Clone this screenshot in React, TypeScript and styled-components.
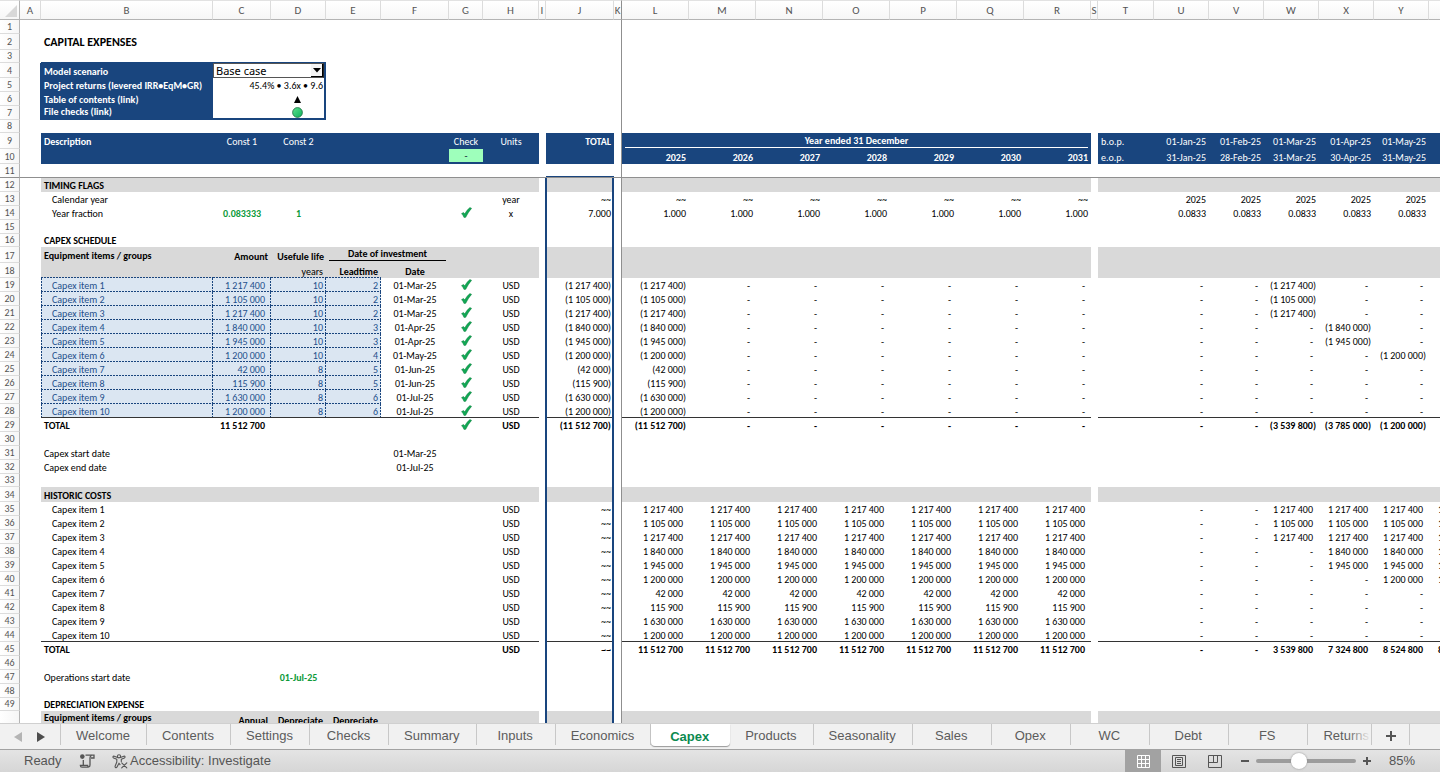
import React from "react";
import styled, { createGlobalStyle, css } from "styled-components";

const NAVY = "#19457e";
const GREY = "#d9d9d9";
const INPUT = "#dbe6f2";
const SHEET_FONT = `Calibri, Carlito, Lato, sans-serif`;
const UI_FONT = `"Liberation Sans", Arial, sans-serif`;

const GlobalStyle = createGlobalStyle`
  * { box-sizing: border-box; }
  body { margin: 0; background: #fff; }
`;

const Page = styled.div`
  display: flex;
  flex-direction: column;
  height: 100vh;
  overflow: hidden;
  font-family: ${UI_FONT};
`;

const Sheet = styled.main`
  flex: 1;
  min-height: 0;
  overflow: hidden;
  background: #fff;
`;

const Grid = styled.table`
  table-layout: fixed;
  width: 0;
  border-collapse: separate;
  border-spacing: 0;
  font: 10px/13px ${SHEET_FONT};
  color: #000;
`;

const Col = styled.col<{ $w: number }>`
  width: ${(p) => p.$w}px;
`;

const ColHead = styled.th<{ $freeze?: boolean }>`
  height: 20px;
  padding: 0;
  overflow: hidden;
  font-weight: 400;
  font-size: 11px;
  color: #555;
  text-align: center;
  background: linear-gradient(#fff, #f6f6f6);
  border-top: 1px solid #e2e2e2;
  border-bottom: 1px solid #b4b4b4;
  border-right: 1px solid ${(p) => (p.$freeze ? "#8f8f8f" : "#dcdcdc")};
`;

const Corner = styled(ColHead)`
  border-right-color: #b4b4b4;
  svg { display: block; margin: 1px 0 0 5px; }
`;

const RowHead = styled.th<{ $freeze?: boolean; $valign?: string }>`
  padding: 0;
  font-weight: 400;
  font-size: 10px;
  line-height: 12px;
  color: #555;
  text-align: center;
  vertical-align: ${(p) => p.$valign ?? "bottom"};
  background: linear-gradient(90deg, #fff, #f6f6f6);
  border-right: 1px solid #b4b4b4;
  border-bottom: 1px solid ${(p) => (p.$freeze ? "#8f8f8f" : "#dcdcdc")};
`;

type Edge = "none" | "freeze" | "total" | "outline" | "boxTop";
type VAlign = "top" | "middle" | "bottom";
interface CellStyle {
  $align?: "left" | "center" | "right";
  $valign?: VAlign;
  $pad?: number;
  $bg?: string;
  $color?: string;
  $bold?: boolean;
  $size?: number;
  $input?: boolean;
  $inputTop?: boolean;
  $bottom?: Edge;
  $col: string;
  $boxed?: boolean;
  $inBox?: boolean;
}

const dashH = `repeating-linear-gradient(90deg, ${NAVY} 0 2px, transparent 2px 3px)`;
const dashV = `repeating-linear-gradient(180deg, ${NAVY} 0 2px, transparent 2px 3px)`;

const Cell = styled.td<CellStyle>`
  padding: 0 ${(p) => p.$pad ?? 3}px;
  text-align: ${(p) => p.$align ?? "right"};
  vertical-align: ${(p) => p.$valign ?? "bottom"};
  white-space: nowrap;
  font-weight: ${(p) => (p.$bold ? 700 : 400)};
  font-size: ${(p) => p.$size ?? 10}px;
  color: ${(p) => p.$color ?? "#000"};
  background-color: ${(p) => p.$bg ?? "transparent"};
  ${(p) => p.$bottom === "freeze" && css`border-bottom: 1px solid #8f8f8f;`}
  ${(p) => p.$bottom === "total" && css`box-shadow: inset 0 -1px #333;`}
  ${(p) => p.$bottom === "boxTop" && css`box-shadow: inset 0 -1px ${NAVY};`}
  ${(p) =>
    p.$bottom === "outline" &&
    css`
      line-height: 12px;
      border-bottom: 2px solid ${NAVY};
    `}
  ${(p) => p.$col === "K" && css`border-right: 1px solid #8f8f8f;`}
  ${(p) => p.$col === "I" && p.$boxed && css`border-right: 1px solid ${NAVY};`}
  ${(p) =>
    p.$col === "J" &&
    p.$boxed &&
    css`
      padding-right: 1px;
      border-left: 1px solid ${NAVY};
      border-right: 2px solid ${NAVY};
    `}
  ${(p) => p.$col === "J" && p.$bottom === "freeze" && css`box-shadow: inset 0 -1px ${NAVY};`}
  ${(p) => p.$col === "A" && p.$inBox && css`border-right: 1px solid ${NAVY};`}
  ${(p) => p.$col === "C" && p.$inBox && css`border-right: 2px solid ${NAVY};`}
  ${(p) =>
    p.$input &&
    css`
      background-color: ${INPUT};
      background-image: ${dashH}, ${dashV};
      background-size: 100% 1px, 1px 100%;
      background-position: 0 100%, 100% 0;
      background-repeat: no-repeat;
    `}
  ${(p) =>
    p.$input &&
    p.$col === "B" &&
    css`
      background-image: ${dashH}, ${dashV}, ${dashV};
      background-size: 100% 1px, 1px 100%, 1px 100%;
      background-position: 0 100%, 100% 0, 0 0;
    `}
  ${(p) =>
    p.$inputTop &&
    css`
      background-image: ${dashH};
      background-size: 100% 1px;
      background-position: 0 100%;
      background-repeat: no-repeat;
    `}
`;

const Row = styled.tr<{ $h: number }>`
  height: ${(p) => p.$h}px;
`;

const RuledLabel = styled.span<{ $line: string }>`
  display: block;
  text-align: center;
  border-bottom: 1px solid ${(p) => p.$line};
`;

const LowLabel = styled.span`
  display: block;
  padding-top: 3px;
`;

const CheckTotal = styled.span`
  display: block;
  margin-bottom: 2px;
  color: #123;
  background: #9effbb;
`;

const ScenarioBox = styled.span`
  display: flex;
  position: relative;
  height: 15px;
  background: #fff;
  border: 1px solid #555;
  border-right-color: #222;
`;

const ScenarioSelect = styled.select`
  flex: 1;
  min-width: 0;
  appearance: none;
  border: 0;
  padding: 0 2px;
  background: transparent;
  color: #000;
  font: 11px/13px "Noto Sans", sans-serif;
`;

const ScenarioArrow = styled.span`
  position: absolute;
  right: 0;
  top: 0;
  display: grid;
  place-items: center;
  width: 12px;
  height: 13px;
  background: #f4f4f4;
  border-right: 1px solid #000;
  border-bottom: 1px solid #000;
  pointer-events: none;
`;

const BoxLink = styled.a`
  display: block;
  padding-left: 58px;
  color: #000;
  svg { display: block; margin: 0 auto; }
`;

const TickIcon = styled.svg`
  display: block;
  margin: 0 auto 2px;
`;

function Tick() {
  return (
    <TickIcon width="11" height="11" viewBox="0 0 12 12" role="img" aria-label="Passed">
      <path
        d="M.6 7.200 2.700 6 4.200 7.400C5.600 4.800 7.500 2.200 9.800.5L11.600 1.500C9.200 4 7 7.500 5.200 11.300L3.300 11.500C2.600 9.800 1.700 8.400.6 7.200Z"
        fill="#12a855"
        stroke="#0a7a3a"
        strokeWidth=".5"
      />
    </TickIcon>
  );
}

const COLS: [string, number][] = [
  ["A", 21], ["B", 172], ["C", 58], ["D", 55], ["E", 55], ["F", 68], ["G", 34], ["H", 56], ["I", 7],
  ["J", 68], ["K", 8], ["L", 67], ["M", 67], ["N", 67], ["O", 67], ["P", 67], ["Q", 67], ["R", 67],
  ["S", 7], ["T", 56], ["U", 55], ["V", 55], ["W", 55], ["X", 55], ["Y", 55], ["Z", 55],
];
const YEARS = ["L", "M", "N", "O", "P", "Q", "R"];
const MONTHS = ["U", "V", "W", "X", "Y", "Z"];
const SPACERS = ["A", "I", "K", "S"];
const CENTRED = ["F", "G", "H"];

interface Value {
  t?: React.ReactNode;
  align?: "left" | "center" | "right";
  valign?: VAlign;
  pad?: number;
  color?: string;
  bold?: boolean;
  size?: number;
  span?: number;
}
type Cells = Record<string, Value | string>;
interface RowData {
  n: number;
  h: number;
  bg?: string;
  color?: string;
  bold?: boolean;
  valign?: VAlign;
  bottom?: Edge;
  input?: boolean;
  inputTop?: boolean;
  inBox?: boolean;
  cells?: Cells;
}

const across = (keys: string[], values: (Value | string)[] | ((i: number) => Value | string)): Cells =>
  Object.fromEntries(keys.map((k, i) => [k, typeof values === "function" ? values(i) : values[i]]));

/* Amounts leave room for a closing bracket; bracketed ones fill it. */
const amount = (t: string): Value => ({ t, pad: t.startsWith("(") ? 3 : 6 });
const dash = amount("-");
const GREEN = "#0c9a3a";

const ITEMS: [string, string, string, string, number][] = [
  ["1 217 400", "10", "2", "01-Mar-25", 2],
  ["1 105 000", "10", "2", "01-Mar-25", 2],
  ["1 217 400", "10", "2", "01-Mar-25", 2],
  ["1 840 000", "10", "3", "01-Apr-25", 3],
  ["1 945 000", "10", "3", "01-Apr-25", 3],
  ["1 200 000", "10", "4", "01-May-25", 4],
  ["42 000", "8", "5", "01-Jun-25", 5],
  ["115 900", "8", "5", "01-Jun-25", 5],
  ["1 630 000", "8", "6", "01-Jul-25", 6],
  ["1 200 000", "8", "6", "01-Jul-25", 6],
];

const heading = (t: string): Cells => ({ B: { t, bold: true } });

const rows: RowData[] = [
  { n: 1, h: 14 },
  { n: 2, h: 16, valign: "middle", cells: { B: { t: "CAPITAL EXPENSES", bold: true, size: 12 } } },
  { n: 3, h: 13, bottom: "boxTop" },
  {
    n: 4, h: 15, inBox: true,
    cells: {
      B: { t: <label htmlFor="scenario">Model scenario</label> },
      C: {
        span: 2, pad: 0,
        t: (
          <ScenarioBox>
            <ScenarioSelect id="scenario" defaultValue="Base case">
              <option>Base case</option>
            </ScenarioSelect>
            <ScenarioArrow>
              <svg width="8" height="5" viewBox="0 0 8 5" aria-hidden="true"><path d="M0 0H8L4 4.500Z" /></svg>
            </ScenarioArrow>
          </ScenarioBox>
        ),
      },
    },
  },
  {
    n: 5, h: 14, inBox: true,
    cells: { B: "Project returns (levered IRR•EqM•GR)", C: { t: "45.4% • 3.6x • 9.6", span: 2, pad: 1 } },
  },
  {
    n: 6, h: 14, inBox: true,
    cells: {
      B: "Table of contents (link)",
      C: {
        span: 2, pad: 0, valign: "middle",
        t: (
          <BoxLink href="#contents" aria-label="Table of contents">
            <svg width="7" height="7" viewBox="0 0 7 7"><path d="M3.500 0 7 7H0Z" /></svg>
          </BoxLink>
        ),
      },
    },
  },
  {
    n: 7, h: 14, inBox: true, bottom: "outline",
    cells: {
      B: "File checks (link)",
      C: {
        span: 2, pad: 0, valign: "middle",
        t: (
          <BoxLink href="#checks" aria-label="File checks">
            <svg width="11" height="11" viewBox="0 0 11 11">
              <defs>
                <linearGradient id="ok" x1="0" y1="0" x2="1" y2="1">
                  <stop offset="0" stopColor="#5fe08f" />
                  <stop offset="1" stopColor="#0db35c" />
                </linearGradient>
              </defs>
              <circle cx="5.500" cy="5.500" r="4.900" fill="url(#ok)" stroke="#1d6b40" strokeWidth=".8" />
            </svg>
          </BoxLink>
        ),
      },
    },
  },
  { n: 8, h: 13 },
  {
    n: 9, h: 16, bg: NAVY, color: "#fff", valign: "middle",
    cells: {
      B: { t: "Description", bold: true },
      C: { t: "Const 1", align: "center" },
      D: { t: "Const 2", align: "center" },
      G: "Check",
      H: "Units",
      J: { t: "TOTAL", bold: true },
      L: { t: <RuledLabel $line="#fff">Year ended 31 December</RuledLabel>, span: 7, bold: true },
      T: { t: "b.o.p.", align: "left" },
      ...across(MONTHS, ["01-Jan-25", "01-Feb-25", "01-Mar-25", "01-Apr-25", "01-May-25", "01-Jun-25"]),
    },
  },
  {
    n: 10, h: 15, bg: NAVY, color: "#fff",
    cells: {
      G: { t: <CheckTotal>-</CheckTotal>, pad: 0 },
      ...across(YEARS, (i) => ({ t: String(2025 + i), bold: true })),
      T: { t: "e.o.p.", align: "left" },
      ...across(MONTHS, ["31-Jan-25", "28-Feb-25", "31-Mar-25", "30-Apr-25", "31-May-25", "30-Jun-25"]),
    },
  },
  { n: 11, h: 14, bottom: "freeze" },
  { n: 12, h: 14, bg: GREY, cells: heading("TIMING FLAGS") },
  {
    n: 13, h: 14,
    cells: {
      B: { t: "Calendar year", pad: 11 },
      H: "year",
      J: "~~",
      ...across(YEARS, () => "~~"),
      ...across(MONTHS, () => "2025"),
    },
  },
  {
    n: 14, h: 14,
    cells: {
      B: { t: "Year fraction", pad: 11 },
      C: { t: "0.083333", align: "center", bold: true, color: GREEN },
      D: { t: "1", align: "center", bold: true, color: GREEN },
      G: { t: <Tick /> },
      H: "x",
      J: "7.000",
      ...across(YEARS, () => "1.000"),
      ...across(MONTHS, () => "0.0833"),
    },
  },
  { n: 15, h: 14 },
  { n: 16, h: 13, cells: heading("CAPEX SCHEDULE") },
  {
    n: 17, h: 16, bg: GREY, bold: true,
    cells: {
      B: { t: "Equipment items / groups", valign: "middle" },
      C: "Amount",
      D: { t: "Usefule life", pad: 2 },
      E: { t: <RuledLabel $line="#000">Date of investment</RuledLabel>, span: 2, valign: "top" },
    },
  },
  {
    n: 18, h: 15, bg: GREY, inputTop: true,
    cells: { D: "years", E: { t: "Leadtime", bold: true }, F: { t: "Date", bold: true } },
  },
  ...ITEMS.map(([cost, life, lead, date, month], i): RowData => ({
    n: 19 + i, h: 14, input: true, bottom: i === 9 ? "total" : undefined,
    cells: {
      B: { t: `Capex item ${i + 1}`, pad: 11 },
      C: amount(cost),
      D: life,
      E: lead,
      F: date,
      G: { t: <Tick /> },
      H: "USD",
      J: `(${cost})`,
      ...across(YEARS, (y) => (y === 0 ? amount(`(${cost})`) : dash)),
      ...across(MONTHS, (m) => (m === month ? amount(`(${cost})`) : dash)),
    },
  })),
  {
    n: 29, h: 14, bold: true,
    cells: {
      B: "TOTAL",
      C: amount("11 512 700"),
      G: { t: <Tick /> },
      H: "USD",
      J: "(11 512 700)",
      ...across(YEARS, (y) => (y === 0 ? amount("(11 512 700)") : dash)),
      ...across(MONTHS, [dash, dash, amount("(3 539 800)"), amount("(3 785 000)"), amount("(1 200 000)"), amount("(157 900)")]),
    },
  },
  { n: 30, h: 14 },
  { n: 31, h: 14, cells: { B: "Capex start date", F: "01-Mar-25" } },
  { n: 32, h: 14, cells: { B: "Capex end date", F: "01-Jul-25" } },
  { n: 33, h: 13 },
  { n: 34, h: 15, bg: GREY, cells: heading("HISTORIC COSTS") },
  ...ITEMS.map(([cost, , , , month], i): RowData => ({
    n: 35 + i, h: 14, bottom: i === 9 ? "total" : undefined,
    cells: {
      B: { t: `Capex item ${i + 1}`, pad: 11 },
      H: "USD",
      J: "~~",
      ...across(YEARS, () => amount(cost)),
      ...across(MONTHS, (m) => (m >= month ? amount(cost) : dash)),
    },
  })),
  {
    n: 45, h: 14, bold: true,
    cells: {
      B: "TOTAL",
      H: "USD",
      J: "~~",
      ...across(YEARS, () => amount("11 512 700")),
      ...across(MONTHS, [dash, dash, amount("3 539 800"), amount("7 324 800"), amount("8 524 800"), amount("8 682 700")]),
    },
  },
  { n: 46, h: 14 },
  { n: 47, h: 14, cells: { B: "Operations start date", D: { t: "01-Jul-25", align: "center", bold: true, color: GREEN } } },
  { n: 48, h: 14 },
  { n: 49, h: 13, cells: heading("DEPRECIATION EXPENSE") },
  {
    n: 50, h: 30, bg: GREY, bold: true,
    cells: {
      B: { t: "Equipment items / groups", valign: "top" },
      C: { t: <LowLabel>Annual</LowLabel>, valign: "top" },
      D: { t: <LowLabel>Depreciate</LowLabel>, valign: "top" },
      E: { t: <LowLabel>Depreciate</LowLabel>, valign: "top" },
    },
  },
];

const INPUT_COLS = ["B", "C", "D", "E"];

function edgeFor(edge: Edge | undefined, col: string): Edge | undefined {
  if (edge === "total" && SPACERS.includes(col)) return undefined;
  if (edge === "outline" && !["B", "C"].includes(col)) return undefined;
  if (edge === "boxTop" && !["B", "C", "D"].includes(col)) return undefined;
  return edge;
}

function SheetRow({ row }: { row: RowData }) {
  const out: React.ReactNode[] = [];
  for (let i = 0; i < COLS.length; i++) {
    const col = COLS[i][0];
    const raw = row.cells?.[col];
    const v: Value = typeof raw === "string" ? { t: raw } : raw ?? {};
    const spacer = SPACERS.includes(col);
    const boxLabel = row.inBox && col === "B";
    const isInput = row.input && INPUT_COLS.includes(col);
    out.push(
      <Cell
        key={col}
        colSpan={v.span}
        $col={col}
        $align={v.align ?? (col === "B" ? "left" : CENTRED.includes(col) ? "center" : "right")}
        $valign={v.valign ?? row.valign}
        $pad={spacer ? 0 : v.pad}
        $bg={boxLabel ? NAVY : spacer ? undefined : row.bg}
        $color={v.color ?? (boxLabel ? "#fff" : isInput ? "#24508c" : row.color)}
        $bold={v.bold ?? (boxLabel || row.bold)}
        $size={v.size}
        $input={isInput}
        $inputTop={row.inputTop && INPUT_COLS.includes(col)}
        $bottom={edgeFor(row.bottom, col)}
        $boxed={row.n >= 12}
        $inBox={row.inBox}
      >
        {v.t}
      </Cell>
    );
    if (v.span) i += v.span - 1;
  }
  return (
    <Row $h={row.h}>
      <RowHead scope="row" $freeze={row.bottom === "freeze"} $valign={row.valign}>{row.n}</RowHead>
      {out}
    </Row>
  );
}

/* ---------- sheet tabs ---------- */

const TabBar = styled.nav`
  display: flex;
  flex: none;
  height: 27px;
  padding-right: 30px;
  overflow: hidden;
  background: #f1f1f1;
  border-top: 1px solid #d0d0d0;
  border-bottom: 1px solid #a2a2a2;
`;

const Scroller = styled.div`
  display: flex;
  flex: none;
  align-items: center;
  gap: 6px;
  width: 61px;
  height: 21px;
  padding: 4px 0 0 9px;
  border-right: 1px solid #c8c8c8;
`;

const BareButton = styled.button`
  display: grid;
  place-items: center;
  padding: 0;
  border: 0;
  background: none;
  color: #555;
`;

const ScrollButton = styled(BareButton)`
  width: 17px;
  height: 17px;
`;

const TabStrip = styled.div`
  position: relative;
  display: flex;
  flex: 0 1 auto;
  min-width: 0;
  overflow: hidden;
  &::after {
    content: "";
    position: absolute;
    right: 0;
    top: 0;
    bottom: 4px;
    width: 24px;
    background: linear-gradient(90deg, rgba(241, 241, 241, 0), #f1f1f1);
  }
`;

const Tab = styled.button<{ $active?: boolean }>`
  flex: none;
  height: 21px;
  min-width: 79px;
  padding: 2px 16px 0 15px;
  border: 0;
  border-right: 1px solid #c8c8c8;
  background: none;
  color: #5c5c5c;
  font: 13px/19px ${UI_FONT};
  ${(p) =>
    p.$active &&
    css`
      height: 22px;
      background: #fff;
      color: #0b8a50;
      font-weight: 700;
      border-right-color: transparent;
      border-radius: 0 0 4px 4px;
      box-shadow: 0 1px 1px #999;
    `}
`;

const AddTab = styled(BareButton)`
  flex: none;
  width: 39px;
  height: 21px;
  padding-top: 3px;
  border-left: 1px solid #c8c8c8;
  border-right: 1px solid #c8c8c8;
`;

const TABS = [
  "Welcome", "Contents", "Settings", "Checks", "Summary", "Inputs", "Economics", "Capex", "Products",
  "Seasonality", "Sales", "Opex", "WC", "Debt", "FS", "Returns",
];

/* ---------- status bar ---------- */

const StatusBar = styled.footer`
  display: flex;
  flex: none;
  align-items: stretch;
  height: 22px;
  color: #555;
  font-size: 13px;
  line-height: 22px;
  background: linear-gradient(#e4e4e4, #d6d6d6);
`;

const Ready = styled.span`
  padding-left: 24px;
  width: 79px;
`;

const StatusButton = styled.button`
  display: flex;
  align-items: center;
  gap: 2px;
  padding: 0;
  margin-right: 16px;
  border: 0;
  background: none;
  color: inherit;
  font: 13px/22px ${UI_FONT};
`;

const Spacer = styled.div`
  flex: 1;
`;

const ViewButton = styled(BareButton)<{ $on?: boolean }>`
  width: 36px;
  background: ${(p) => (p.$on ? "#a2a2a2" : "none")};
  color: ${(p) => (p.$on ? "#fff" : "#555")};
`;

const Zoom = styled.div`
  display: flex;
  align-items: center;
  gap: 7px;
  padding-left: 8px;
`;

const ZoomRange = styled.input`
  appearance: none;
  width: 100px;
  height: 20px;
  margin: 0;
  background: none;
  &::-webkit-slider-runnable-track {
    height: 4px;
    border-radius: 2px;
    background: #9c9c9c;
  }
  &::-webkit-slider-thumb {
    appearance: none;
    width: 16px;
    height: 16px;
    margin-top: -6px;
    border-radius: 50%;
    background: #fff;
    box-shadow: 0 0 2px #888;
  }
`;

const ZoomValue = styled.output`
  width: 62px;
  padding-left: 11px;
`;

export default function App() {
  return (
    <Page>
      <GlobalStyle />
      <Sheet>
        <Grid>
          <colgroup>
            <Col $w={20} />
            {COLS.map(([c, w]) => <Col key={c} $w={w} />)}
          </colgroup>
          <thead>
            <tr>
              <Corner>
                <svg width="12" height="12" viewBox="0 0 12 12" aria-hidden="true"><path d="M12 0V12H0Z" fill="#d8d8d8" /></svg>
              </Corner>
              {COLS.map(([c]) => <ColHead key={c} scope="col" $freeze={c === "K"}>{c}</ColHead>)}
            </tr>
          </thead>
          <tbody>
            {rows.map((r) => <SheetRow key={r.n} row={r} />)}
          </tbody>
        </Grid>
      </Sheet>

      <TabBar aria-label="Sheets">
        <Scroller>
          <ScrollButton aria-label="Previous sheets">
            <svg width="8" height="10" viewBox="0 0 8 10"><path d="M8 0V10L0 5Z" fill="#b4b4b4" /></svg>
          </ScrollButton>
          <ScrollButton aria-label="Next sheets">
            <svg width="8" height="10" viewBox="0 0 8 10"><path d="M0 0V10L8 5Z" fill="#4d4d4d" /></svg>
          </ScrollButton>
        </Scroller>
        <TabStrip>
          {TABS.map((t) => <Tab key={t} $active={t === "Capex"}>{t}</Tab>)}
        </TabStrip>
        <AddTab aria-label="Add sheet">
          <svg width="10" height="10" viewBox="0 0 10 10" stroke="currentColor" strokeWidth="2"><path d="M5 0V10M0 5H10" /></svg>
        </AddTab>
      </TabBar>

      <StatusBar>
        <Ready>Ready</Ready>
        <StatusButton aria-label="Record macro">
          <svg width="17" height="14" viewBox="0 0 17 14" fill="none" stroke="#555" strokeWidth="1.300">
            <circle cx="3.300" cy="2.600" r="2.300" fill="#555" stroke="none" />
            <path d="M6.500 1.200H15V4H12" />
            <path d="M12.600 1.400C11.200 1.800 11 2.800 11 4V11C11 13.300 8.900 13.400 8.600 11.400H1.400C1.400 12.600 2 13.200 3 13.200H9.500" />
            <path d="M4.300 6V11.300" />
          </svg>
        </StatusButton>
        <StatusButton>
          <svg width="16" height="15" viewBox="0 0 16 15" fill="none" stroke="#555" strokeWidth="1.100" strokeLinejoin="round" strokeLinecap="round">
            <circle cx="7" cy="2.300" r="1.600" />
            <path d="M5.600 3.600 2.300 2.200C1 1.800.4 3.300 1.600 3.900L4.800 5.300V8L3.100 12.300C2.800 13.700 4.400 14.200 5 13L7 9.200 8 10.600" />
            <path d="M8.400 3.600 11.800 2.200C13.100 1.800 13.600 3.300 12.400 3.900L9.300 5.300V7.500" />
            <path d="M9.700 8.800 14.800 13.900M14.800 8.800 9.700 13.900" />
          </svg>
          Accessibility: Investigate
        </StatusButton>
        <Spacer />
        <ViewButton $on aria-label="Normal view">
          <svg width="13" height="13" viewBox="0 0 13 13" fill="none" stroke="currentColor"><path d="M.5.5H12.500V12.500H.5ZM4.500.5V12.500M8.500.5V12.500M.5 4.500H12.500M.5 8.500H12.500" /></svg>
        </ViewButton>
        <ViewButton aria-label="Page layout view">
          <svg width="14" height="13" viewBox="0 0 14 13" fill="none" stroke="currentColor"><path d="M.5.5H13.500V12.500H.5ZM3.500 2.500H10.500V10.500H3.500ZM5 4.500H9M5 6.500H9M5 8.500H9" /></svg>
        </ViewButton>
        <ViewButton aria-label="Page break preview">
          <svg width="14" height="13" viewBox="0 0 14 13" fill="none" stroke="currentColor"><path d="M.5.5H13.500V12.500H.5ZM.5 7.500H9.500V.5M5.500.5V7.500" /></svg>
        </ViewButton>
        <Zoom>
          <BareButton aria-label="Zoom out">
            <svg width="8" height="8" viewBox="0 0 8 8" stroke="currentColor" strokeWidth="2"><path d="M0 4H8" /></svg>
          </BareButton>
          <ZoomRange type="range" min={0} max={100} defaultValue={42} aria-label="Zoom" />
          <BareButton aria-label="Zoom in">
            <svg width="8" height="8" viewBox="0 0 8 8" stroke="currentColor" strokeWidth="2"><path d="M0 4H8M4 0V8" /></svg>
          </BareButton>
          <ZoomValue>85%</ZoomValue>
        </Zoom>
      </StatusBar>
    </Page>
  );
}
